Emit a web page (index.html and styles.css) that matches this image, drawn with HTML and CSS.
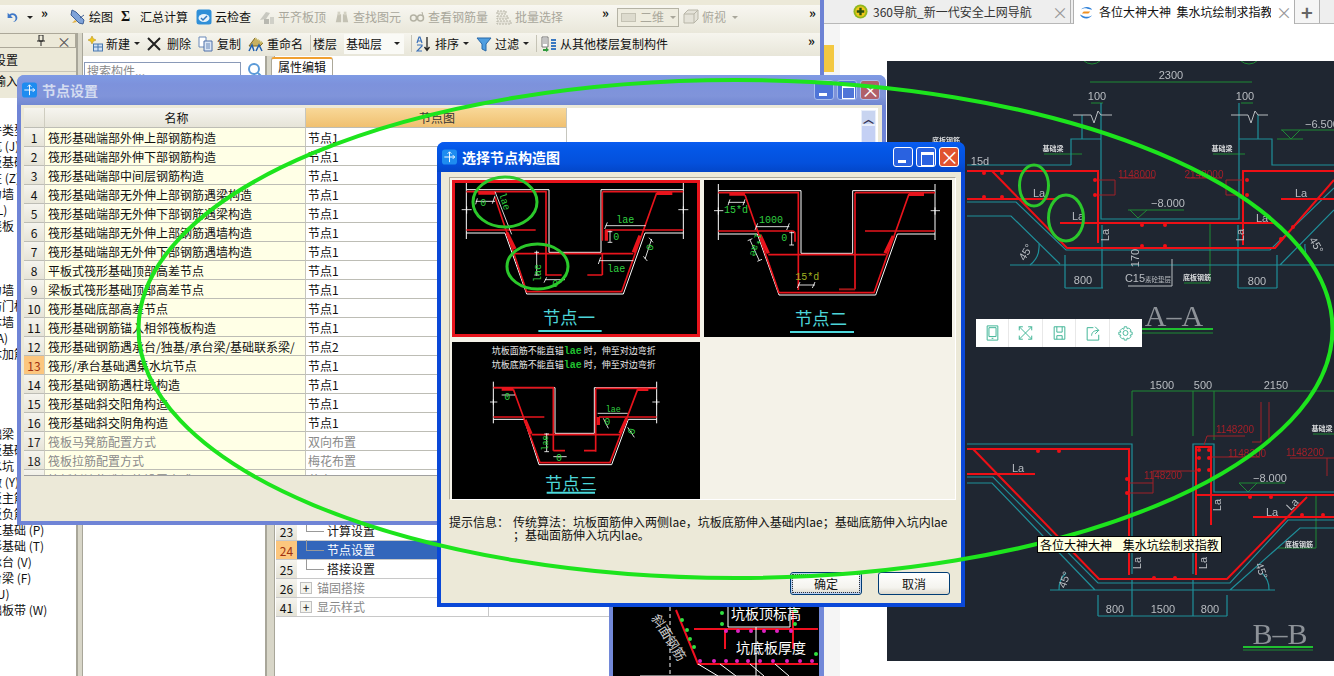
FILE: index.html
```html
<!DOCTYPE html>
<html lang="zh">
<head>
<meta charset="utf-8">
<title>节点设置</title>
<link rel="stylesheet" href="styles.css">
</head>
<body>
<div class="desktop">

  <!-- main application window -->
  <section class="app">
    <div class="topbar">
      <div class="qa">
        <svg class="ico" viewBox="0 0 16 16"><path d="M3 3v6h6L6.500 6.600C8.500 5 11.500 6 12 9c.3 2-1 3.800-3 4.500 3.500.2 5.500-2.500 5-5.500C13.300 4 8.500 2.300 5 5z" fill="#3f78c8"/></svg>
        <span class="caret dark"></span>
        <span class="chev">»</span>
      </div>
      <div class="tools">
        <span class="tool"><svg class="ico" viewBox="0 0 16 16"><path d="M2 1l4 2 8 8-1 4-4-1-8-8z" fill="#7fa3d9" stroke="#3e5f96"/><path d="M5 11l-3 3 5-1z" fill="#e0b040"/><path d="M10 9l4-3" stroke="#3e5f96"/></svg>绘图</span>
        <span class="tool"><b class="sigma">Σ</b>汇总计算</span>
        <span class="tool"><svg class="ico" viewBox="0 0 16 16"><rect x=".5" y=".5" width="15" height="15" rx="2.500" fill="#2f8fd8"/><ellipse cx="8" cy="9" rx="5.500" ry="4" fill="#e8f3fb"/><path d="M5 9l2 2 4-4" stroke="#2f78c0" stroke-width="1.500" fill="none"/></svg>云检查</span>
        <span class="tool off"><svg class="ico" viewBox="0 0 16 16"><path d="M1 11l6-8 4 1-4 6z" fill="#c8c8c0"/><rect x="5" y="10" width="5" height="5" fill="#b8b8b0"/><rect x="11" y="8" width="4" height="7" fill="#d0d0c8"/></svg>平齐板顶</span>
        <span class="tool off"><svg class="ico" viewBox="0 0 18 16"><path d="M2 14l2-9h4v9zM10 14V5h4l2 9z" fill="#c4c2b4"/><rect x="4" y="2" width="3" height="4" fill="#d4d2c4"/><rect x="11" y="2" width="3" height="4" fill="#d4d2c4"/></svg>查找图元</span>
        <span class="tool off"><svg class="ico" viewBox="0 0 16 16"><circle cx="4.500" cy="9" r="3" fill="none" stroke="#b4b2a4" stroke-width="1.500"/><circle cx="11.500" cy="9" r="3" fill="none" stroke="#b4b2a4" stroke-width="1.500"/><path d="M7 8h2M14 7l-1-4" stroke="#b4b2a4"/></svg>查看钢筋量</span>
        <span class="tool off"><svg class="ico" viewBox="0 0 16 16"><path d="M1 2h9v3H1zM1 7h11v3H1zM1 12h14v3H1z" fill="#e4e2d8" stroke="#b8b6a8" stroke-dasharray="2 1"/></svg>批量选择</span>
        <span class="chev push">»</span>
        <span class="combo3d"><i class="plane"></i><span class="combo3d-t">二维</span><span class="caret"></span></span>
        <span class="tool off"><svg class="ico" viewBox="0 0 16 16"><path d="M1 5l4-4h10v9l-4 4H1z" fill="#e4e2d8" stroke="#b8b6a8"/><path d="M1 5h10v9M11 5l4-4" stroke="#b8b6a8" fill="none"/></svg>俯视<span class="caret"></span></span>
        <span class="chev end">»</span>
      </div>
    </div>

    <div class="workspace">
      <aside class="dock">
        <div class="dock-head"><svg class="pin" viewBox="0 0 8 11"><path d="M2 0h4v6H2zM0 6h8M4 6v5" fill="none" stroke="#222"/></svg><span class="dock-x">×</span></div>
        <div class="dock-row">设置</div>
        <div class="dock-row">输入</div>
        <ul class="tree">
          <li>构件类型</li><li>基坑 (J)</li><li>筏板基础</li><li>暗柱 (Z)</li><li>剪力墙</li><li>基 (L)</li><li>现浇板</li>
          <li></li><li></li><li></li>
          <li>剪力墙</li><li>人防门框墙</li><li>砌体墙</li><li>暗 (A)</li><li>砌体加筋</li>
          <li></li><li></li><li></li><li></li>
          <li>基础梁</li><li>筏板基础</li><li>集水坑</li><li>柱墩 (Y)</li><li>筏板主筋</li><li>筏板负筋</li>
          <li>独立基础 (P)</li><li>条形基础 (T)</li><li>桩承台 (V)</li><li>承台梁 (F)</li><li>桩 (U)</li><li>基础板带 (W)</li>
        </ul>
      </aside>
      <div class="split wide"></div>
      <div class="main">
        <div class="toolbar2">
          <span class="tool"><svg class="ico" viewBox="0 0 16 16"><path d="M5 0l1.300 2.700L9 4 6.300 5.300 5 8 3.700 5.300 1 4l2.700-1.300z" fill="#f0c820" stroke="#b08810" stroke-width=".5"/><rect x="6.500" y="8" width="9" height="7" fill="#cfe0f5" stroke="#4878b0"/><path d="M6.500 11h9M11 8v7" stroke="#4878b0"/></svg>新建<span class="caret dark"></span></span>
          <span class="tool"><svg class="ico x" viewBox="0 0 14 14"><path d="M1 1l12 12M13 1L1 13" stroke="#222" stroke-width="2"/></svg>删除</span>
          <span class="tool"><svg class="ico" viewBox="0 0 16 16"><path d="M1 1h7v10H1z" fill="#fff" stroke="#6888b8"/><path d="M6 5h8v10H6z" fill="#dbe6f5" stroke="#4f70a8"/><path d="M8 8h4M8 10h4M8 12h4" stroke="#6888b8"/></svg>复制</span>
          <span class="tool"><svg class="ico" viewBox="0 0 16 16"><path d="M1 10l6-8 8 5-3 3z" fill="#c8b060" stroke="#806820"/><path d="M7 2l8 5" stroke="#e8e0a0"/><path d="M1 15l3-6 2 6M8 15l3-6 3 6" fill="none" stroke="#2060b0" stroke-width="1.500"/></svg>重命名</span>
          <i class="vsep"></i>
          <span class="tool tight">楼层</span>
          <span class="combo"><span>基础层</span><span class="caret dark"></span></span>
          <i class="vsep"></i>
          <span class="tool"><svg class="ico" viewBox="0 0 16 16"><path d="M1 7l2-6h1l2 6M2 5h3M1 9h5v1l-5 5h5" fill="none" stroke="#3a70b8" stroke-width="1.200"/><path d="M11 1v13M8.500 11l2.500 3.500 2.500-3.500" stroke="#222" stroke-width="1.300" fill="none"/></svg>排序<span class="caret dark"></span></span>
          <span class="tool"><svg class="ico" viewBox="0 0 16 16"><path d="M1 2h14L10 8v7l-4-2V8z" fill="#4f9ee0" stroke="#2868a8"/></svg>过滤<span class="caret dark"></span></span>
          <i class="vsep"></i>
          <span class="tool"><svg class="ico" viewBox="0 0 16 16"><path d="M1 1h6v10H1z" fill="#fff" stroke="#777"/><path d="M2 3h4M2 5h4M2 7h4" stroke="#888"/><path d="M2 13h3v-2l3 3-3 2v-1H2z" fill="#2e9a3c"/><path d="M10 4h5M10 7h5M10 10h5M10 13h5" stroke="#3a78c0" stroke-width="2"/></svg>从其他楼层复制构件</span>
          <span class="chev end">»</span>
        </div>
        <div class="panes">
          <div class="pane-mid">
            <div class="search"><span class="search-box">搜索构件...</span><svg class="ico" viewBox="0 0 16 16"><circle cx="7" cy="7" r="5" fill="none" stroke="#5a9ad8" stroke-width="2"/><path d="M11 11l4 4" stroke="#5a9ad8" stroke-width="2"/></svg></div>
          </div>
          <div class="split"></div>
          <div class="pane-props">
            <div class="tabstrip"><span class="tab">属性编辑</span></div>
            <div class="props">
              <div class="prop"><span class="pno">23</span><span class="pname leaf">计算设置</span><span class="pval"></span></div>
              <div class="prop sel"><span class="pno">24</span><span class="pname leaf">节点设置</span><span class="pval"></span></div>
              <div class="prop"><span class="pno">25</span><span class="pname leaf">搭接设置</span><span class="pval"></span></div>
              <div class="prop dim"><span class="pno">26</span><span class="pname"><i class="plus">+</i>锚固搭接</span><span class="pval"></span></div>
              <div class="prop dim"><span class="pno">41</span><span class="pname"><i class="plus">+</i>显示样式</span><span class="pval"></span></div>
            </div>
          </div>
        </div>
      </div>
    </div>
  </section>

  <!-- picture viewer behind the dialogs -->
  <section class="viewer">
    <svg class="viewer-img" viewBox="613 600 206 76">
      <path class="l-r" d="M676 610l22 54h120M694 629h124M725 629v20M793 610v39"/>
      <path class="l-w1" d="M728 605v22h62v-22M756 627v49M698 664l20 12M720 664l16 12M750 664l14 12M775 664l14 12M640 676h120"/>
      <path class="l-wd" d="M670 600v76"/>
      <g class="dots-g"><circle cx="722" cy="613" r="2"/><circle cx="722" cy="624" r="2"/><circle cx="795" cy="624" r="2"/><circle cx="795" cy="611" r="2"/><circle cx="816" cy="654" r="2"/><circle cx="687" cy="630" r="2"/><circle cx="690" cy="639" r="2"/><circle cx="694" cy="647" r="2"/><circle cx="682" cy="620" r="2"/></g>
      <g class="dots-m"><circle cx="700" cy="661" r="2"/><circle cx="714" cy="661" r="2"/><circle cx="726" cy="661" r="2"/><circle cx="737" cy="661" r="2"/><circle cx="748" cy="661" r="2"/><circle cx="760" cy="661" r="2"/><circle cx="773" cy="661" r="2"/><circle cx="787" cy="661" r="2"/><circle cx="800" cy="661" r="2"/><circle cx="812" cy="661" r="2"/><circle cx="726" cy="631" r="2"/><circle cx="738" cy="631" r="2"/><circle cx="751" cy="631" r="2"/><circle cx="764" cy="631" r="2"/><circle cx="777" cy="631" r="2"/><circle cx="791" cy="631" r="2"/></g>
      <text class="v-t" x="731" y="619">坑板顶标高</text>
      <text class="v-t" x="736" y="653">坑底板厚度</text>
      <text class="v-s" transform="translate(651 618) rotate(58)">斜面钢筋</text>
    </svg>
  </section>

  <!-- browser window -->
  <section class="browser">
    <div class="tabs">
      <span class="btab first"><svg class="ico" viewBox="0 0 16 16"><circle cx="8" cy="8" r="7.500" fill="#8fb820"/><circle cx="8" cy="8" r="5.500" fill="#f0c818"/><path d="M8 4v8M4 8h8" stroke="#2a5010" stroke-width="2.500"/></svg><span class="btab-t">360导航_新一代安全上网导航</span><span class="bx">×</span></span>
      <span class="btab active"><svg class="ico" viewBox="0 0 16 16"><path d="M14 5C12 1 5 1 2 5c2-1 4-2 7-1zM1 10c2 5 10 6 13 1-3 2-6 2-9 1z" fill="#2f80d8"/><path d="M5 7h7l-2 2H3z" fill="#f09020"/></svg><span class="btab-t">各位大神大神&nbsp; 集水坑绘制求指教</span><span class="bx">×</span></span>
      <span class="btab plus-tab">+</span>
    </div>
    <div class="page">
      <div class="gutter"><i class="bookmark"></i></div>
      <svg class="cad" viewBox="887 61 447 600">
        <text class="c-txt sm" x="946" y="143">底板钢筋</text>
        <!-- A-A -->
        <g class="c-g"><circle cx="1092" cy="52" r="12"/><circle cx="1249" cy="52" r="12"/><path d="M1090 82h162M1091 103h12M1241 103h12M1277 139h26M1281 130h53M1282 130l9 9 9-9M1128 210h56M1130 210l8 8 9-8M1210 224v58M1184 283h26M1044 154h38M1213 154h32"/></g>
        <g class="c-t"><path d="M1101 103v116h138V103M1071 165V139h30M967 165h104M1239 139h33v26h62M1082 115v24M1258 115v24"/>
          <path d="M967 202h49l50 48h204l64-62M967 216h44l49 48M1010 265h324M1280 265l54-55"/>
          <path d="M1065 255v33M1102 225v63M1065 288h38M1238 225v63M1277 255v33M1238 288h39"/>
          <path d="M1039 244a24 24 0 0 1-9 21M1305 244a24 24 0 0 0 9 21"/></g>
        <g class="c-w"><path d="M1073 115h18l3 8 4-12 3 4h11M1231 115h17l3 8 4-12 3 4h10M1172 259v27h-44"/></g>
        <g class="c-r"><path d="M967 171h131v72M967 199h88M992 171l75 77h208l59-68M1060 223h215M1243 245v-74h91M1281 199h53"/></g>
        <g class="c-rd"><path d="M1098 180h17v15h-17M1120 178h35M1187 178h35M1243 180h-17v15h17"/></g>
        <g class="c-dot"><circle cx="984" cy="173" r="2"/><circle cx="1002" cy="173" r="2"/><circle cx="984" cy="197" r="2"/><circle cx="1002" cy="197" r="2"/><circle cx="1095" cy="180" r="2"/><circle cx="1095" cy="195" r="2"/><circle cx="1142" cy="225" r="2"/><circle cx="1165" cy="225" r="2"/><circle cx="1142" cy="246" r="2"/><circle cx="1165" cy="246" r="2"/><circle cx="1247" cy="180" r="2"/><circle cx="1247" cy="195" r="2"/><circle cx="1293" cy="227" r="2"/><circle cx="1281" cy="239" r="2"/></g>
        <text class="c-txt" x="1171" y="79">2300</text><text class="c-txt" x="1097" y="100">100</text><text class="c-txt" x="1245" y="100">100</text>
        <text class="c-txt" x="1039" y="197">La</text><text class="c-txt" x="1078" y="220">La</text><text class="c-txt" x="1301" y="197">La</text><text class="c-txt" x="1262" y="222">La</text>
        <text class="c-txt" transform="translate(1109 235) rotate(-90)">La</text><text class="c-txt" transform="translate(1244 235) rotate(-90)">La</text>
        <text class="c-txt" x="980" y="165">15d</text>
        <text class="c-txt" x="1168" y="207">−8.000</text><text class="c-txt" x="1322" y="128">−6.500</text>
        <text class="c-txt" transform="translate(1139 258) rotate(-90)">170</text>
        <text class="c-txt sm" x="1053" y="151">基础梁</text><text class="c-txt sm" x="1222" y="151">基础梁</text>
        <text class="c-txt" x="1148" y="282">C15<tspan class="c-mini">素砼垫层</tspan></text><text class="c-txt sm" x="1197" y="280">底板钢筋</text>
        <text class="c-txt" x="1083" y="284">800</text><text class="c-txt" x="1257" y="285">800</text>
        <text class="c-txt" transform="translate(1029 254) rotate(-60)">45°</text><text class="c-txt" transform="translate(1313 247) rotate(60)">45°</text>
        <text class="c-title" x="1174" y="326">A–A</text>
        <path class="c-under" d="M1142 329h71"/><path class="c-under2" d="M1142 333h71"/>
        <!-- B-B -->
        <g class="c-g"><path d="M1132 391h202M1132 391v45M1193 391v45M1214 391v49M1239 483h46M1239 483l9 9 9-9M1313 434h21M1278 548h38M1316 495v53"/></g>
        <g class="c-t"><path d="M967 444h165v30M1132 474v100M1193 574V444h21v48h120"/>
          <path d="M967 477h26l105 106h132l58-63h46M967 483h25l103 107M1050 590h225M1230 590l70-62h34"/>
          <path d="M1098 595v21M1132 578v38M1193 578v38M1227 595v21M1098 616h129"/>
          <path d="M1066 573a22 22 0 0 0-7 17M1262 573a22 22 0 0 1 7 17"/></g>
        <g class="c-r"><path d="M967 449h162v126M967 474h68M973 449l126 130h128l80-82M1196 575V447h15v78M1196 495h138M1253 517h81"/></g>
        <g class="c-rd"><path d="M1204 445l3-9h38M1212 457h48M1129 483h24v-12h44M1129 493h24v-10M1290 458h44M1327 458v18"/><path d="M1261 402v40h-9M1269 402v40"/></g>
        <g class="c-dot"><circle cx="1038" cy="451" r="2"/><circle cx="1059" cy="451" r="2"/><circle cx="1127" cy="479" r="2"/><circle cx="1127" cy="493" r="2"/><circle cx="1199" cy="450" r="2"/><circle cx="1209" cy="450" r="2"/><circle cx="1199" cy="458" r="2"/><circle cx="1209" cy="458" r="2"/><circle cx="1199" cy="470" r="2"/><circle cx="1209" cy="470" r="2"/><circle cx="1154" cy="578" r="2"/><circle cx="1175" cy="578" r="2"/><circle cx="1250" cy="497" r="2"/><circle cx="1271" cy="497" r="2"/><circle cx="1302" cy="515" r="2"/><circle cx="1323" cy="515" r="2"/></g>
        <text class="c-txt" x="1162" y="389">1500</text><text class="c-txt" x="1203" y="389">500</text><text class="c-txt" x="1276" y="389">2150</text>
        <text class="c-txt" x="1018" y="472">La</text><text class="c-txt" x="1272" y="516">La</text>
        <text class="c-txt" transform="translate(1141 563) rotate(-90)">La</text><text class="c-txt" transform="translate(1207 563) rotate(-90)">La</text><text class="c-txt" transform="translate(1221 505) rotate(-90)">La</text>
        <text class="c-txt" transform="translate(1295 507) rotate(-45)">La</text>
        <text class="c-txt" x="1270" y="482">−8.000</text>
        <text class="c-txt sm" x="1322" y="431">基础梁</text><text class="c-txt sm" x="1299" y="547">底板钢筋</text>
        <text class="c-red" x="1235" y="433">1148200</text><text class="c-red" x="1247" y="457">1148200</text><text class="c-red" x="1163" y="479">1148200</text><text class="c-red" x="1305" y="456">1148200</text><text class="c-red" x="1137" y="178">1148000</text><text class="c-red" x="1204" y="178">2148000</text>
        <text class="c-txt" x="1115" y="613">800</text><text class="c-txt" x="1163" y="613">1500</text><text class="c-txt" x="1210" y="613">800</text>
        <text class="c-txt" transform="translate(1068 581) rotate(-70)">45°</text><text class="c-txt" transform="translate(1258 572) rotate(70)">45°</text>
        <text class="c-title" x="1280" y="644">B–B</text>
        <path class="c-under" d="M1243 647h70"/><path class="c-under2" d="M1243 650h70"/>
      </svg>
      <div class="snipbar">
        <span class="snip"><svg viewBox="0 0 16 18"><path d="M2 1h12v16H2zM4 3h8v10H4zM7 15h2"/></svg></span>
        <span class="snip"><svg viewBox="0 0 16 18"><path d="M1 2l14 14M15 2L1 16M1 2h4M1 2v4M15 2h-4M15 2v4M1 16h4M1 16v-4M15 16h-4M15 16v-4"/></svg></span>
        <span class="snip"><svg viewBox="0 0 16 18"><path d="M2 2h12v14H2zM5 2v6h6V2M5 16v-4h6v4"/></svg></span>
        <span class="snip"><svg viewBox="0 0 16 18"><path d="M9 3H2v14h13v-6M7 12c0-4 3-6 8-6M11 2l4 4-4 4"/></svg></span>
        <span class="snip"><svg viewBox="0 0 18 18"><circle cx="9" cy="9" r="3"/><path d="M7.500 1.500h3l.5 2.500 2-1 2.500 2.500-1 2 2.500.5v3l-2.500.5 1 2-2.500 2.500-2-1-.5 2.500h-3l-.5-2.500-2 1-2.500-2.500 1-2-2.500-.5v-3L3.500 8l-1-2L5 3.500l2 1z"/></svg></span>
      </div>
    </div>
  </section>

  <!-- node settings dialog -->
  <section class="win inactive node-win">
    <header class="win-title">
      <svg class="win-icon" viewBox="0 0 16 16"><rect width="16" height="16" rx="3" fill="#1e8cf0"/><path d="M8 2.500v11M2.500 8h11M6 4.500l2-2 2 2M11.500 6l2 2-2 2" stroke="#fff" fill="none"/></svg>
      <span class="win-name">节点设置</span>
      <span class="win-btns"><i class="wb min"></i><i class="wb max"></i><i class="wb close">×</i></span>
    </header>
    <div class="win-body">
      <div class="grid">
        <div class="gcols">
          <div class="gtable">
            <div class="gr head"><span class="gn"></span><span class="gname">名称</span><span class="gval">节点图</span></div>
            <div class="gr"><span class="gn">1</span><span class="gname">筏形基础端部外伸上部钢筋构造</span><span class="gval">节点1</span></div>
            <div class="gr"><span class="gn">2</span><span class="gname">筏形基础端部外伸下部钢筋构造</span><span class="gval">节点1</span></div>
            <div class="gr"><span class="gn">3</span><span class="gname">筏形基础端部中间层钢筋构造</span><span class="gval">节点1</span></div>
            <div class="gr"><span class="gn">4</span><span class="gname">筏形基础端部无外伸上部钢筋遇梁构造</span><span class="gval">节点1</span></div>
            <div class="gr"><span class="gn">5</span><span class="gname">筏形基础端部无外伸下部钢筋遇梁构造</span><span class="gval">节点1</span></div>
            <div class="gr"><span class="gn">6</span><span class="gname">筏形基础端部无外伸上部钢筋遇墙构造</span><span class="gval">节点1</span></div>
            <div class="gr"><span class="gn">7</span><span class="gname">筏形基础端部无外伸下部钢筋遇墙构造</span><span class="gval">节点1</span></div>
            <div class="gr"><span class="gn">8</span><span class="gname">平板式筏形基础顶部高差节点</span><span class="gval">节点1</span></div>
            <div class="gr"><span class="gn">9</span><span class="gname">梁板式筏形基础顶部高差节点</span><span class="gval">节点1</span></div>
            <div class="gr"><span class="gn">10</span><span class="gname">筏形基础底部高差节点</span><span class="gval">节点1</span></div>
            <div class="gr"><span class="gn">11</span><span class="gname">筏形基础钢筋锚入相邻筏板构造</span><span class="gval">节点1</span></div>
            <div class="gr"><span class="gn">12</span><span class="gname">筏形基础钢筋遇承台/独基/承台梁/基础联系梁/</span><span class="gval">节点2</span></div>
            <div class="gr cur"><span class="gn">13</span><span class="gname">筏形/承台基础遇集水坑节点</span><span class="gval">节点1</span></div>
            <div class="gr"><span class="gn">14</span><span class="gname">筏形基础钢筋遇柱墩构造</span><span class="gval">节点1</span></div>
            <div class="gr"><span class="gn">15</span><span class="gname">筏形基础斜交阳角构造</span><span class="gval">节点1</span></div>
            <div class="gr"><span class="gn">16</span><span class="gname">筏形基础斜交阴角构造</span><span class="gval">节点1</span></div>
            <div class="gr grey"><span class="gn">17</span><span class="gname">筏板马凳筋配置方式</span><span class="gval">双向布置</span></div>
            <div class="gr grey"><span class="gn">18</span><span class="gname">筏板拉筋配置方式</span><span class="gval">梅花布置</span></div>
            <div class="gr grey"><span class="gn"></span><span class="gname">筏板封边构造钢筋设置方式</span><span class="gval">节点1</span></div>
          </div>
          <div class="gblank"><div class="vscroll"><span class="vup">︿</span><span class="vthumb"></span></div></div>
        </div>
      </div>
    </div>
  </section>

  <!-- node picker dialog -->
  <section class="win active pick-win">
    <header class="win-title">
      <svg class="win-icon" viewBox="0 0 16 16"><rect width="16" height="16" rx="3" fill="#1e8cf0"/><path d="M8 2.500v11M2.500 8h11M6 4.500l2-2 2 2M11.500 6l2 2-2 2" stroke="#fff" fill="none"/></svg>
      <span class="win-name">选择节点构造图</span>
      <span class="win-btns"><i class="wb min"></i><i class="wb max"></i><i class="wb close">×</i></span>
    </header>
    <div class="win-body">
      <div class="gallery">
        <figure class="node picked">
          <svg class="nsvg" viewBox="21 33 744 471">
            <path class="n-w" d="M64 42v168M64 62h248v188h156V62h247M715 42v168M64 192h116l65 183h290l65-183h115"/>
            <path class="n-r" d="M64 68h239v252M303 318h47M150 85l95 283h285l105-296M472 68h243M472 68v147M64 183h208M480 183h235M205 254h360M472 254v64M427 318h45"/>
            <path class="n-rt" d="M100 72h50M185 190l25 50M635 73h47M565 250l20-50M484 183v32"/>
            <path class="n-t" d="M50 122h30M65 112v22M700 122h30M715 112v22M92 97h58M97 88l-5 18M150 80l-8 24M482 170h120M487 160l-8 20M462 275h103M467 265l-7 20M275 245v75M268 250h14M268 318h14M495 185v35M488 188h14M488 220h14M600 270l20-60M595 262l12 14M612 206l12 14M300 332h60M305 325l-8 16M355 325l-8 16M150 68l50 128"/>
            <text class="n-g" x="115" y="110">0</text>
            <text class="n-g" transform="translate(170 100) rotate(72)">lae</text>
            <text class="n-g" x="541" y="161">lae</text>
            <text class="n-g" x="514" y="212">0</text>
            <text class="n-g" transform="translate(624 238) rotate(-70)">0</text>
            <text class="n-g" transform="translate(289 312) rotate(-90)">lae</text>
            <text class="n-g" x="331" y="355">0</text>
            <text class="n-g" x="514" y="308">lae</text>
            <text class="n-cap" x="372" y="466">节点一</text>
            <path class="n-u" d="M280 486h190"/>
          </svg>
        </figure>
        <figure class="node">
          <svg class="nsvg" viewBox="12 30 744 471">
            <path class="n-w" d="M55 42v168M55 62h248v188h155V62h247M705 42v168M55 192h117l65 183h290l65-183h113"/>
            <path class="n-r" d="M55 68h240v292M135 75l102 293h285l105-296M465 68h240M465 68v290M55 183h222q8 0 8 8v24M495 183h210M205 254h352"/>
            <path class="n-rt" d="M88 72h47M180 195l25 55M627 73h45M555 250l25-52"/>
            <path class="n-rd" d="M417 358h48"/>
            <path class="n-t" d="M42 122h28M55 112v22M692 122h28M705 112v22M85 97h50M90 88l-6 18M135 88l-6 18M168 170h100M173 160l-8 20M268 160l-8 20M275 185v40M268 188h14M268 225h14M150 210l28 62M143 212l14-6M172 274l14-6M295 345h50M300 336l-8 18M345 336l-8 18"/>
            <text class="n-g" x="108" y="128">15*d</text>
            <text class="n-g" x="213" y="160">1000</text>
            <text class="n-g" x="253" y="212">0</text>
            <text class="n-g" transform="translate(158 222) rotate(104)">1*ae</text>
            <text class="n-g olive" x="322" y="330">15*d</text>
            <text class="n-cap" x="363" y="466">节点二</text>
            <path class="n-u" d="M270 486h192"/>
          </svg>
        </figure>
        <figure class="node">
          <svg class="nsvg" viewBox="21 6 744 471">
            <text class="n-note" x="140" y="43">坑板面筋不能直锚<tspan class="n-lae">lae</tspan> 时，伸至对边弯折</text>
            <text class="n-note" x="140" y="85">坑板底筋不能直锚<tspan class="n-lae">lae</tspan> 时，伸至对边弯折</text>
            <path class="n-w" d="M145 125v125M145 143h185v137h118V143h187M635 125v125M145 238h93l44 136h218l50-136h85"/>
            <path class="n-r" d="M145 143h180v189M325 332h35M205 148l80 220h210l83-220M452 145h183M452 148v187M417 332h35M145 231h153M462 231h173M260 284h265"/>
            <path class="n-rt" d="M170 147h35M578 148h32M240 240l18 42M525 280l20-45M460 231v24"/>
            <path class="n-t" d="M135 186h22M145 178v16M622 186h22M635 178v16M170 165h40M458 220h90M305 280v55M298 282h14M298 335h14M475 235l15 30M548 262l20 30M325 350h40"/>
            <text class="n-g" x="187" y="180">0</text>
            <text class="n-g sm" x="505" y="217">lae</text>
            <text class="n-g" x="487" y="256">0</text>
            <text class="n-g" transform="translate(569 276) rotate(-75)">0</text>
            <text class="n-g sm" transform="translate(308 309) rotate(-90)">lae</text>
            <text class="n-g" x="342" y="362">0</text>
            <text class="n-cap" x="378" y="451">节点三</text>
            <path class="n-u" d="M305 458h145"/>
          </svg>
        </figure>
      </div>
      <div class="hint"><span class="hint-l">提示信息：</span><span class="hint-t">传统算法：坑板面筋伸入两侧lae，坑板底筋伸入基础内lae；基础底筋伸入坑内lae<br>；基础面筋伸入坑内lae。</span></div>
      <div class="actions"><button class="xp default">确定</button><button class="xp">取消</button></div>
    </div>
  </section>

  <!-- hand-drawn green annotations -->
  <svg class="marks" viewBox="0 0 1334 676">
    <ellipse class="big" cx="735.500" cy="329" rx="597" ry="249"/>
    <ellipse class="ring" cx="505" cy="202" rx="32" ry="25"/>
    <ellipse class="ring" cx="537.500" cy="266.500" rx="30.500" ry="22.500"/>
    <ellipse class="ring" cx="1034" cy="185.500" rx="14.500" ry="20.500"/>
    <ellipse class="ring" cx="1066" cy="218" rx="17.500" ry="23"/>
  </svg>

  <div class="tooltip">各位大神大神 集水坑绘制求指教</div>
</div>
</body>
</html>
```

FILE: styles.css
```css
* { box-sizing: border-box; }
html, body { margin: 0; padding: 0; background: #fff; }
body { font: 12px/1 "Noto Sans CJK SC", "Liberation Sans", sans-serif; color: #111; }
.desktop { position: relative; width: 1334px; height: 676px; overflow: hidden; background: #fff; }

/* ---------- main app window ---------- */
.app { position: absolute; left: 0; top: 0; width: 824px; height: 676px; display: flex; flex-direction: column; background: #fff; border-right: 4px solid #6d82d4; }
.topbar { height: 33px; flex: none; display: flex; padding: 5px 0 4px; background: linear-gradient(#ece9d8 0 5px, #f8f7f1 5px, #e9e7da); }
.qa { width: 65px; flex: none; display: flex; align-items: center; padding-left: 5px; gap: 8px; }
.qa .ico { width: 14px; height: 14px; }
.tools { flex: 1; display: flex; align-items: center; gap: 8px; padding-left: 5px; padding-right: 4px; }
.toolbar2 { height: 23px; flex: none; display: flex; align-items: center; gap: 7px; padding: 0 5px 2px 4px; background: linear-gradient(#f6f5ee, #e8e6d9); }
.tool { display: inline-flex; align-items: center; gap: 3px; white-space: nowrap; }
.tool.off { color: #a9a79b; }
.tool.tight { margin-left: -2px; }
.ico { width: 16px; height: 16px; flex: none; display: block; }
.ico.x { width: 14px; height: 14px; margin-right: 3px; }
.sigma { width: 11px; margin-right: 5px; font: bold 14px "Liberation Serif", serif; }
.caret { display: inline-block; width: 0; height: 0; margin-left: 1px; border: 3px solid transparent; border-top: 3px solid #a9a79b; border-bottom: 0; }
.qa .caret { margin-left: 0; }
.caret.dark { border-top-color: #222; }
.tool.off .caret { margin-left: 3px; }
.chev { font-size: 13px; font-weight: 700; line-height: 10px; align-self: flex-start; margin-top: 3px; }
.qa .chev { margin-top: 3px; }
.chev.push { margin-left: 31px; }
.chev.end { margin-left: auto; }
.combo3d { display: inline-flex; align-items: center; flex: none; width: 62px; height: 19px; margin-right: -4px; padding: 0 3px; gap: 4px; color: #a9a79b; border: 1px solid #b5b3a5; background: #eeecdf; }
.combo3d-t { white-space: nowrap; }
.combo3d .caret { margin-left: 2px; }
.plane { width: 15px; height: 9px; flex: none; background: #dddbce; border: 1px solid #c4c2b4; }
.combo { display: inline-flex; align-items: center; justify-content: space-between; width: 60px; height: 20px; padding: 0 4px 0 2px; background: #fafaf6; white-space: nowrap; }
.vsep { width: 1px; height: 17px; background: #c5c3b5; margin-right: -3px; }

.workspace { flex: 1; display: flex; min-height: 0; }
.dock { width: 76px; flex: none; overflow: hidden; background: #fff; }
.dock-head { height: 15px; display: flex; justify-content: flex-end; align-items: center; gap: 12px; padding-right: 4px; background: #ece9d8; border: 1px solid #aca899; border-width: 1px 1px 1px 0; color: #333; font-size: 11px; }
.pin { width: 8px; height: 11px; display: block; }
.dock-x { font-size: 14px; color: #555; }
.dock-row { height: 23px; background: #ece9d8; padding: 6px 0 0 0; margin-left: -6px; white-space: nowrap; }
.dock-row + .dock-row { height: 27px; padding-top: 3px; border-top: 1px solid #c8c6b8; }
.tree { list-style: none; margin: 24px 0 0 -22px; padding: 0; }
.tree li { height: 16px; line-height: 16px; white-space: nowrap; }
.split { width: 10px; flex: none; background: #d8d6c8; border-left: 2px solid #a8a699; border-right: 1px solid #a8a699; }
.split.wide { width: 7px; }
.main { flex: 1; min-width: 0; display: flex; flex-direction: column; }
.panes { flex: 1; display: flex; min-height: 0; }
.pane-mid { width: 182px; flex: none; padding: 6px 0 0 1px; }
.search { display: flex; align-items: center; gap: 6px; }
.search-box { width: 157px; height: 16px; padding: 2px; color: #8a8a8a; border: 1px solid #8a9ab8; background: #fff; }
.pane-props { flex: 1; min-width: 0; }
.tabstrip { height: 19px; margin-left: -4px; display: flex; align-items: flex-end; }
.tab { width: 62px; height: 18px; text-align: center; line-height: 16px; background: #fff; border: 1px solid #aca899; border-bottom: 0; border-top: 2px solid #f0a030; border-radius: 3px 3px 0 0; }
.props { margin: 447px 0 0 1px; width: 336px; }
.prop { height: 19px; display: flex; align-items: center; border-bottom: 1px solid #c8c8c8; }
.pno { width: 21px; height: 100%; flex: none; text-align: center; line-height: 19px; background: linear-gradient(#f5f4ee, #e4e2d6); }
.pname { flex: 1; height: 100%; display: flex; align-items: center; padding-left: 3px; background: #fff; }
.pval { width: 124px; height: 100%; flex: none; background: #fff; border-left: 1px solid #c8c8c8; }
.pname.leaf { padding-left: 30px; position: relative; }
.pname.leaf::before { content: ""; position: absolute; left: 9px; top: -1px; width: 17px; height: 10px; border-left: 1px solid #999; border-bottom: 1px solid #999; }
.prop.sel .pno { background: #fcc67e; color: #a03010; }
.prop.sel .pname { background: #3366bb; color: #fff; }
.prop.dim .pname { color: #888; }
.plus { width: 12px; height: 12px; margin-right: 5px; display: inline-flex; align-items: center; justify-content: center; font-style: normal; color: #222; border: 1px solid #c0c0c0; background: #f4f4ee; }

/* ---------- viewer behind dialogs ---------- */
.viewer { position: absolute; left: 609px; top: 600px; width: 215px; height: 76px; background: #000; border: 0 solid #7288d8; border-width: 0 5px 0 4px; }
.viewer-img { display: block; width: 206px; height: 76px; }
.l-r { fill: none; stroke: #f01020; stroke-width: 2; }
.l-w1 { fill: none; stroke: #fff; stroke-width: 1; }
.l-wd { fill: none; stroke: #fff; stroke-dasharray: 4 3; }
.dots-g { fill: #30e040; }
.dots-m { fill: #e020c0; }
.v-t { font-size: 14px; fill: #fff; }
.v-s { font-size: 13px; fill: #ccc; }

/* ---------- browser ---------- */
.browser { position: absolute; left: 824px; top: 0; width: 510px; height: 676px; display: flex; flex-direction: column; background: #fff; }
.tabs { height: 24px; flex: none; display: flex; align-items: stretch; padding-left: 21px; background: #eeeeee; border-bottom: 1px solid #b8b8b8; }
.btab { display: flex; align-items: center; gap: 5px; border-right: 1px solid #b0b0b0; white-space: nowrap; }
.btab.first { width: 226px; padding-left: 8px; }
.btab.active { width: 222px; padding-left: 5px; margin-left: 2px; margin-bottom: -1px; background: #fff; border-left: 1px solid #b0b0b0; }
.btab .ico { width: 15px; height: 15px; }
.btab-t { flex: 1; overflow: hidden; color: #333; line-height: 16px; }
.active .btab-t { color: #111; }
.bx { width: 16px; margin-right: 2px; text-align: center; font-size: 16px; color: #999; }
.plus-tab { width: 25px; justify-content: center; font-size: 20px; font-weight: 700; color: #666; background: #f5f5f5; }
.page { flex: 1; display: flex; position: relative; min-height: 0; }
.gutter { width: 16px; flex: none; background: #f5f5f5; padding-top: 21px; }
.bookmark { display: block; width: 10px; height: 27px; background: #f3c842; }
.cad { display: block; flex: none; width: 447px; height: 600px; margin: 37px 0 0 47px; background: #1f2631; filter: blur(.35px); }
.c-g path, .c-g circle { fill: none; stroke: #1f8a35; stroke-width: 1; }
.c-t path { fill: none; stroke: #1f8f9a; stroke-width: 1.200; }
.c-w path { fill: none; stroke: #b8bcc0; stroke-width: 1; }
.c-r path { fill: none; stroke: #ee1016; stroke-width: 2; }
.c-rd path { fill: none; stroke: #a02028; stroke-width: 1; }
.c-dot { fill: #ee1016; }
.c-txt { font: 11px "Liberation Sans", "Noto Sans CJK SC", sans-serif; fill: #b9bdc2; text-anchor: middle; }
.c-txt.sm { font-size: 7px; font-weight: 700; fill: #d8dadc; }
.c-mini { font-size: 6.500px; }
.c-red { font: 10px "Liberation Sans", sans-serif; fill: #a51f28; text-anchor: middle; }
.c-title { font: 30px "Liberation Serif", serif; fill: #8d9298; text-anchor: middle; }
.c-under { fill: none; stroke: #20c030; stroke-width: 2; }
.c-under2 { fill: none; stroke: #1f8a35; stroke-width: 1; }
.snipbar { position: absolute; left: 152px; top: 295px; width: 166px; height: 28px; display: flex; background: #fff; }
.snip { flex: 1; display: flex; align-items: center; justify-content: center; border-right: 1px solid #e8e8e8; }
.snip:last-child { border-right: 0; }
.snip svg { width: 15px; height: 16px; fill: none; stroke: #3fb496; stroke-width: 1.100; }

/* ---------- dialogs ---------- */
.win { position: absolute; display: flex; flex-direction: column; border: 4px solid; border-top: 0; border-radius: 8px 8px 0 0; }
.win-title { height: 30px; flex: none; margin: 0 -4px; padding: 0 6px 0 5px; display: flex; align-items: center; gap: 4px; border-radius: 7px 7px 0 0; font-weight: 700; font-size: 14px; }
.win-icon { width: 15px; height: 16px; flex: none; }
.win-name { flex: 1; padding-left: 1px; }
.win-btns { display: flex; gap: 3px; }
.wb { width: 20px; height: 20px; display: block; border: 1px solid #fff; border-radius: 3px; position: relative; font-style: normal; color: #fff; text-align: center; font-size: 19px; line-height: 17px; font-weight: 400; }
.wb.min::after { content: ""; position: absolute; left: 4px; bottom: 3px; width: 8px; height: 3px; background: #fff; }
.wb.max::after { content: ""; position: absolute; left: 4px; top: 4px; width: 11px; height: 10px; border: 1px solid #fff; border-top-width: 3px; }
.node-win { left: 17px; top: 75px; width: 869px; height: 450px; border-color: #6f84d6; background: #ece9d8; }
.inactive .win-title { background: linear-gradient(#7f9be4, #7d92dc 30%, #8094da 70%, #7288d2); color: #d4dcf0; }
.inactive .wb { background: #4f75d8; border-color: #a8bcec; }
.inactive .wb.close { background: #b0606a; }
.active .win-title { background: linear-gradient(#0a5cf0, #0458e8 20%, #0450dc 70%, #0346c8); color: #fff; }
.active .wb { background: #2a62e0; }
.active .wb.close { background: #e0532f; }
.pick-win { left: 437px; top: 142px; width: 528px; height: 465px; border-color: #0a48d8; background: #ece9d8; }

.win-body { flex: 1; min-height: 0; display: flex; flex-direction: column; }
.node-win .win-body { padding: 3px 4px 0 3px; }
.grid { height: 368px; flex: none; overflow: hidden; background: #fff; border: 0 solid #a0a0a0; border-bottom-width: 1px; }
.gcols { display: flex; align-items: flex-start; }
.gtable { width: 543px; flex: none; }
.gr { height: 19px; display: flex; }
.gr span { border-bottom: 1px solid #bdbdb5; white-space: nowrap; overflow: hidden; line-height: 20px; }
.gn { width: 21px; flex: none; text-align: center; background: linear-gradient(#f5f4ee, #e6e4d8); border-right: 1px solid #cfcdc0; }
.gname { width: 261px; flex: none; padding-left: 3px; background: #ffffe6; border-right: 1px solid #c6c6be; }
.gval { width: 261px; flex: none; padding-left: 2px; background: #fff; border-right: 1px solid #c6c6be; }
.gr.head { height: 20px; }
.gr.head .gname { text-align: center; background: linear-gradient(#f6f5f0, #e6e4d8); }
.gr.head .gval { text-align: center; background: linear-gradient(#f8d898, #f0c070); color: #333; }
.gr.cur .gn { background: #fcc67e; color: #a03010; }
.gr.grey .gname, .gr.grey .gval, .gr.grey .gn { color: #8a8a8a; }
.gr.grey .gn { color: #222; }
.gblank { flex: 1; display: flex; justify-content: flex-end; padding: 2px 2px 0 0; }
.vscroll { width: 15px; display: flex; flex-direction: column; }
.vup { height: 15px; text-align: center; line-height: 15px; font-size: 11px; font-weight: 700; color: #335; background: #c8d4f0; border: 1px solid #e8eefa; }
.vthumb { height: 40px; background: #c4d0f4; border: 1px solid #e8eefa; }

.pick-win .win-body { padding: 5px 5px 0 8px; }
.gallery { width: 507px; height: 323px; flex: none; display: grid; grid-template-columns: 248px 248px; grid-auto-rows: 157px; gap: 5px 4px; padding: 2px 3px 0 2px; align-content: start; background: #f4f2e8; border: 1px solid; border-color: #aca899 #fff #fff #aca899; }
.node { margin: 0; background: #000; position: relative; }
.nsvg { display: block; width: 248px; height: 157px; }
.node.picked::after { content: ""; position: absolute; inset: 0; border: 3px solid #e8141c; }
.n-w { fill: none; stroke: #fff; stroke-width: 3; }
.n-r { fill: none; stroke: #e8141c; stroke-width: 5; }
.n-rt { fill: none; stroke: #e8141c; stroke-width: 10; }
.n-rd { fill: none; stroke: #a01818; stroke-width: 6; }
.n-t { fill: none; stroke: #fff; stroke-width: 2.500; }
.n-g { font: 30px "Liberation Mono", monospace; fill: #30d040; text-anchor: middle; }
.n-g.sm { font-size: 25px; }
.n-g.olive { fill: #a0b020; }
.n-cap { font-size: 52px; fill: #4cd4d8; text-anchor: middle; }
.n-u { fill: none; stroke: #4cd8dc; stroke-width: 6; }
.n-note { font-size: 27px; fill: #e8e8e8; }
.n-lae { font: bold 30px "Liberation Mono", monospace; fill: #20c030; }

.hint { display: flex; margin-top: 15px; line-height: 13px; white-space: nowrap; }
.hint-l { width: 64px; flex: none; }
.actions { display: flex; justify-content: flex-end; gap: 16px; padding: 31px 6px 0 0; }
.xp { width: 72px; height: 23px; padding: 0; font: inherit; color: #111; border: 1px solid #003c74; border-radius: 3px; background: linear-gradient(#fff, #f4f3ee 70%, #dcd8cc); }
.xp.default { outline: 1px dotted #333; outline-offset: -3px; box-shadow: inset 0 0 0 2px #bcd0f0; }

/* ---------- annotations ---------- */
.marks { position: absolute; left: 0; top: 0; width: 1334px; height: 676px; pointer-events: none; }
.big { fill: none; stroke: #1de41d; stroke-width: 4; }
.ring { fill: none; stroke: #2bc82b; stroke-width: 3; }
.tooltip { position: absolute; left: 1037px; top: 536px; width: 185px; height: 17px; padding-left: 2px; line-height: 15px; word-spacing: 8px; white-space: nowrap; color: #000; background: #ffffe1; border: 1px solid #000; }
```
